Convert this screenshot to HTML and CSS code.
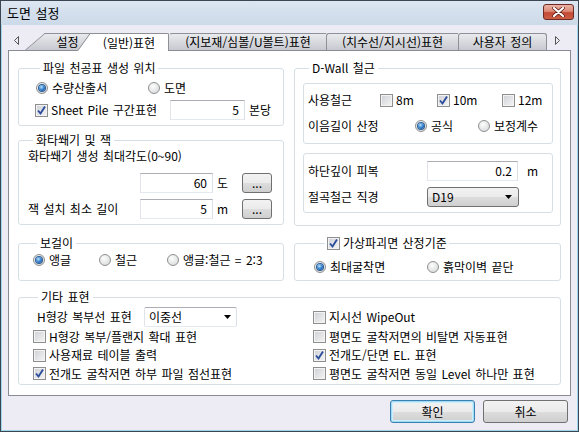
FILE: index.html
```html
<!DOCTYPE html>
<html lang="ko">
<head>
	<meta charset="utf-8" />
	<title>도면 설정</title>
	<link rel="stylesheet" href="styles.css">
</head>
<body>
	<div class="window">
		<div class="titlebar">
			<span class="title">도면 설정</span>
			<span class="close">
				<svg width="13" height="10" viewBox="0 0 13 10"><path d="M2 1 L11 9 M11 1 L2 9" stroke="#5a1d16" stroke-width="3.6" stroke-linecap="round"/><path d="M2 1 L11 9 M11 1 L2 9" stroke="#fff" stroke-width="2.2" stroke-linecap="round"/></svg>
			</span>
		</div>
		<div class="client">
			<div class="tabstrip">
				<span class="scroll left"><svg width="5" height="9"><polygon points="4.5,0.5 0.5,4.5 4.5,8.5" fill="none" stroke="#555"/></svg></span>
				<span class="tab slant first">설정</span>
				<span class="tab slant active">(일반)표현</span>
				<span class="tab boxed t3">(지보재/심볼/U볼트)표현</span>
				<span class="tab boxed t4">(치수선/지시선)표현</span>
				<span class="tab boxed t5">사용자 정의</span>
				<span class="scroll right"><svg width="5" height="9"><polygon points="0.5,0.5 4.5,4.5 0.5,8.5" fill="none" stroke="#555"/></svg></span>
			</div>

			<div class="page">
				<div class="column">
					<fieldset class="group g-file">
						<legend>파일 천공표 생성 위치</legend>
						<div class="row">
							<span class="option w112"><i class="radio on"></i>수량산출서</span>
							<span class="option"><i class="radio"></i>도면</span>
						</div>
						<div class="row">
							<span class="option w135"><i class="check"><svg width="11" height="11"><path d="M2 5.5 L4.5 8.5 L9 1.5" fill="none" stroke="#2c4c9c" stroke-width="1.9"/></svg></i>Sheet Pile 구간표현</span>
							<span class="edit w75">5</span>
							<span class="unit">본당</span>
						</div>
					</fieldset>

					<fieldset class="group g-wedge">
						<legend>화타쐐기 및 잭</legend>
						<div class="caption">화타쐐기 생성 최대각도(0~90)</div>
						<div class="row first-input">
							<span class="edit w73">60</span>
							<span class="unit w24">도</span>
							<span class="dots">...</span>
						</div>
						<div class="row second-input">
							<span class="label w112">잭 설치 최소 길이</span>
							<span class="edit w73">5</span>
							<span class="unit w24">m</span>
							<span class="dots">...</span>
						</div>
					</fieldset>
				</div>

				<fieldset class="group g-dwall">
					<legend>D-Wall 철근</legend>
					<div class="box box-top">
						<div class="row">
							<span class="label w72">사용철근</span>
							<span class="option w57"><i class="check"></i>8m</span>
							<span class="option w65"><i class="check"><svg width="11" height="11"><path d="M2 5.5 L4.5 8.5 L9 1.5" fill="none" stroke="#2c4c9c" stroke-width="1.9"/></svg></i>10m</span>
							<span class="option"><i class="check"></i>12m</span>
						</div>
						<div class="row">
							<span class="label w106">이음길이 산정</span>
							<span class="option w63"><i class="radio on"></i>공식</span>
							<span class="option"><i class="radio"></i>보정계수</span>
						</div>
					</div>
					<div class="box box-bottom">
						<div class="row">
							<span class="label w119">하단깊이 피복</span>
							<span class="edit w91">0.2</span>
							<span class="unit far">m</span>
						</div>
						<div class="row">
							<span class="label w119">절곡철근 직경</span>
							<span class="combo list w92">D19<svg width="7" height="4"><polygon points="0,0 7,0 3.5,4" fill="#000"/></svg></span>
						</div>
					</div>
				</fieldset>

				<fieldset class="group g-hook">
					<legend>보걸이</legend>
					<div class="row">
						<span class="option w66"><i class="radio on"></i>앵글</span>
						<span class="option w68"><i class="radio"></i>철근</span>
						<span class="option"><i class="radio"></i>앵글:철근 = 2:3</span>
					</div>
				</fieldset>

				<fieldset class="group g-failure">
					<legend><i class="check"><svg width="11" height="11"><path d="M2 5.5 L4.5 8.5 L9 1.5" fill="none" stroke="#2c4c9c" stroke-width="1.9"/></svg></i>가상파괴면 산정기준</legend>
					<div class="row">
						<span class="option w113"><i class="radio on"></i>최대굴착면</span>
						<span class="option"><i class="radio"></i>흙막이벽 끝단</span>
					</div>
				</fieldset>

				<fieldset class="group g-misc">
					<legend>기타 표현</legend>
					<div class="misc-grid">
						<div class="row">
							<span class="label w107 indent">H형강 복부선 표현</span>
							<span class="combo edit-combo w93">이중선<svg width="7" height="4"><polygon points="0,0 7,0 3.5,4" fill="#000"/></svg></span>
						</div>
						<div class="row"><span class="option"><i class="check"></i>지시선 WipeOut</span></div>
						<div class="row"><span class="option"><i class="check"></i>H형강 복부/플랜지 확대 표현</span></div>
						<div class="row"><span class="option"><i class="check"></i>평면도 굴착저면의 비탈면 자동표현</span></div>
						<div class="row"><span class="option"><i class="check"></i>사용재료 테이블 출력</span></div>
						<div class="row"><span class="option"><i class="check"><svg width="11" height="11"><path d="M2 5.5 L4.5 8.5 L9 1.5" fill="none" stroke="#2c4c9c" stroke-width="1.9"/></svg></i>전개도/단면 EL. 표현</span></div>
						<div class="row"><span class="option"><i class="check"><svg width="11" height="11"><path d="M2 5.5 L4.5 8.5 L9 1.5" fill="none" stroke="#2c4c9c" stroke-width="1.9"/></svg></i>전개도 굴착저면 하부 파일 점선표현</span></div>
						<div class="row"><span class="option"><i class="check"></i>평면도 굴착저면 동일 Level 하나만 표현</span></div>
					</div>
				</fieldset>
			</div>

			<div class="buttons">
				<span class="button default">확인</span>
				<span class="button">취소</span>
			</div>
		</div>
	</div>
</body>
</html>
```

FILE: styles.css
```css
html, body
{
	margin: 0;
	padding: 0;
}

body
{
	width: 579px;
	height: 432px;
	overflow: hidden;
	font-family: "Noto Sans CJK KR", "Liberation Sans", sans-serif;
	font-size: 12px;
	line-height: 14px;
	word-spacing: 1px;
	color: #000;
}

.window
{
	box-sizing: border-box;
	width: 579px;
	height: 432px;
	border: 1px solid #3b4652;
	background: #edecf5;
	display: flex;
	flex-direction: column;
}

	.titlebar
	{
		flex: none;
		height: 24px;
		display: flex;
		justify-content: space-between;
		align-items: center;
		padding: 0 4px 0 6px;
		background: linear-gradient(#dce6f2, #ccd9e8);
	}

	.title
	{
		font-size: 13px;
	}

	.close
	{
		align-self: flex-start;
		margin-top: 3px;
		width: 29px;
		height: 14px;
		border: 1px solid #6e2a22;
		border-radius: 3px;
		background: linear-gradient(#ebb3a6 0%, #dc8a76 45%, #c44a36 55%, #cc5e46 100%);
		display: flex;
		align-items: center;
		justify-content: center;
	}

.client
{
	flex: 1;
	display: flex;
	flex-direction: column;
	padding: 0 7px;
	box-shadow: inset 1px 0 #9cd6ea, inset -1px 0 #9cd6ea, inset 0 -1px #9cd6ea;
}

/* tabs */

.tabstrip
{
	height: 25px;
	display: flex;
	align-items: flex-end;
	position: relative;
	z-index: 2;
}

	.scroll
	{
		display: flex;
		margin-bottom: 5px;
	}

		.scroll.left
		{
			margin-left: 6px;
			margin-right: 26px;
		}

		.scroll.right
		{
			margin-left: 8px;
		}

	.tab
	{
		box-sizing: border-box;
		height: 17px;
		position: relative;
		z-index: 1;
		display: flex;
		align-items: center;
		justify-content: center;
		border-top: 1px solid #8d9096;
		background: linear-gradient(#e9eaed, #c6c9cf);
		white-space: nowrap;
	}

		.tab.slant::before
		{
			content: "";
			position: absolute;
			z-index: -1;
			top: -1px;
			bottom: 0;
			background: inherit;
			border-top: 1px solid #8d9096;
			border-left: 1px solid #7d8086;
			transform-origin: bottom left;
		}

		.tab.first
		{
			width: 45px;
		}

			.tab.first::before
			{
				left: -20px;
				width: 24px;
				transform: skewX(-49.6deg);
			}

		.tab.active
		{
			width: 79px;
			height: 18px;
			margin-bottom: -1px;
			z-index: 3;
			background: #fff;
			border-right: 1px solid #8d9096;
			border-top-right-radius: 2px;
		}

			.tab.active::before
			{
				left: -13px;
				width: 18px;
				transform: skewX(-35.8deg);
			}

		.tab.boxed
		{
			border-left: 1px solid #8d9096;
			border-top-left-radius: 3px;
		}

		.tab.t3
		{
			width: 157px;
			border-left-color: transparent;
		}

		.tab.t4
		{
			width: 132px;
		}

		.tab.t5
		{
			width: 89px;
			border-right: 1px solid #8d9096;
			border-top-right-radius: 3px;
		}

/* tab page */

.page
{
	box-sizing: border-box;
	height: 346px;
	border: 1px solid #898c95;
	background: #fff;
	padding: 10px 9px 0;
	display: grid;
	grid-template-columns: 266px 267px;
	column-gap: 10px;
	align-content: start;
	align-items: start;
}

.group
{
	margin: 0;
	padding: 0;
	min-width: 0;
	border: 1px solid #d5dfe5;
	border-radius: 3px;
}

	.group legend
	{
		height: 14px;
		line-height: 14px;
		margin-left: 5px;
		padding: 0 3px;
	}

.row
{
	display: flex;
	align-items: center;
	height: 20px;
	white-space: nowrap;
}

.option
{
	display: flex;
	align-items: center;
}

.label
{
	flex: none;
}

.indent
{
	margin-left: 4px;
}

.w24 { width: 24px; }
.w57 { width: 57px; }
.w63 { width: 63px; }
.w65 { width: 65px; }
.w66 { width: 66px; }
.w68 { width: 68px; }
.w72 { width: 72px; }
.w73 { width: 73px; }
.w75 { width: 75px; }
.w91 { width: 91px; }
.w92 { width: 92px; }
.w93 { width: 93px; }
.w106 { width: 106px; }
.w107 { width: 107px; }
.w112 { width: 112px; }
.w113 { width: 113px; }
.w119 { width: 119px; }
.w135 { width: 135px; }

/* controls */

.check, .radio
{
	flex: none;
	box-sizing: border-box;
	display: inline-flex;
	align-items: center;
	justify-content: center;
	margin-right: 3px;
}

.check
{
	width: 13px;
	height: 13px;
	border: 1px solid #8f8f8f;
	background: linear-gradient(135deg, #cdd0d5, #f5f5f5);
	box-shadow: inset 0 0 0 1px #f3f3f3;
}

.radio
{
	width: 12px;
	height: 12px;
	margin-left: 1px;
	margin-right: 4px;
	border: 1px solid #8f9090;
	border-radius: 50%;
	background: radial-gradient(circle at 40% 35%, #fdfdfd, #d3d4d6);
}

	.radio.on::after
	{
		content: "";
		width: 6px;
		height: 6px;
		border-radius: 50%;
		background: radial-gradient(circle at 40% 35%, #b7e2fb, #2a78c8 55%, #0f4590);
		box-shadow: 0 0 0 1px #2c5d94;
	}

.edit
{
	flex: none;
	box-sizing: border-box;
	height: 20px;
	line-height: 18px;
	padding: 0 5px;
	text-align: right;
	border: 1px solid;
	border-color: #abadb3 #dbdfe6 #e3e9ef #e2e3ea;
	background: #fff;
}

.unit
{
	margin-left: 4px;
}

	.unit.far
	{
		margin-left: 9px;
	}

.dots, .button, .combo.list
{
	box-sizing: border-box;
	border: 1px solid #707070;
	border-radius: 3px;
	background: linear-gradient(#f2f2f2 0%, #ebebeb 50%, #dddddd 51%, #cfcfcf 100%);
}

.dots
{
	flex: none;
	width: 30px;
	height: 20px;
	margin-left: 1px;
	text-align: center;
	line-height: 18px;
}

.combo
{
	flex: none;
	box-sizing: border-box;
	height: 20px;
	display: flex;
	align-items: center;
	justify-content: space-between;
	padding: 0 6px 0 4px;
}

	.combo.edit-combo
	{
		border: 1px solid;
		border-color: #abadb3 #dbdfe6 #e3e9ef #e2e3ea;
		border-radius: 2px;
		background: #fff;
		padding-right: 5px;
	}

/* groups */

.column .group + .group
{
	margin-top: 7px;
}

.g-file
{
	padding: 3px 0 5px 16px;
}

	.g-file .row + .row
	{
		margin-top: 2px;
	}

.g-wedge
{
	padding: 0 0 5px 9px;
}

	.g-wedge .caption
	{
		height: 15px;
		line-height: 14px;
		padding-top: 2px;
	}

	.g-wedge .first-input
	{
		margin-top: 9px;
		padding-left: 112px;
	}

	.g-wedge .second-input
	{
		margin-top: 6px;
	}

.g-dwall
{
	padding: 8px 7px 12px 8px;
}

	.g-dwall legend
	{
		margin-left: 6px;
	}

	.box
	{
		border: 1px solid #d5dfe5;
		border-radius: 3px;
		padding-left: 4px;
	}

	.box .row + .row
	{
		margin-top: 6px;
	}

	.box-top
	{
		padding-top: 6px;
		padding-bottom: 7px;
	}

	.box-bottom
	{
		margin-top: 9px;
		padding-top: 7px;
		padding-bottom: 5px;
	}

.g-hook
{
	margin-top: 10px;
	padding: 0 0 10px 13px;
}

.g-failure
{
	margin-top: 10px;
	padding: 7px 0 3px 18px;
}

	.g-failure legend
	{
		display: flex;
		align-items: center;
		margin-left: 12px;
		padding: 0 2px;
	}

.g-misc
{
	grid-column: 1 / span 2;
	margin-top: 9px;
	padding: 3px 0 1px 14px;
}

	.misc-grid
	{
		display: grid;
		grid-template-columns: 280px 1fr;
		grid-template-rows: 20px 19px 18px 19px;
	}

		.misc-grid .row
		{
			height: auto;
		}

/* buttons */

.buttons
{
	display: flex;
	justify-content: flex-end;
	gap: 8px;
	margin-top: 4px;
	padding-right: 3px;
}

	.button
	{
		width: 85px;
		height: 23px;
		display: flex;
		align-items: center;
		justify-content: center;
	}

		.button.default
		{
			border-color: #3c7fb1;
			box-shadow: inset 0 0 0 1px #9fdcf6, inset 0 0 0 2px #cdeefc;
		}
```
